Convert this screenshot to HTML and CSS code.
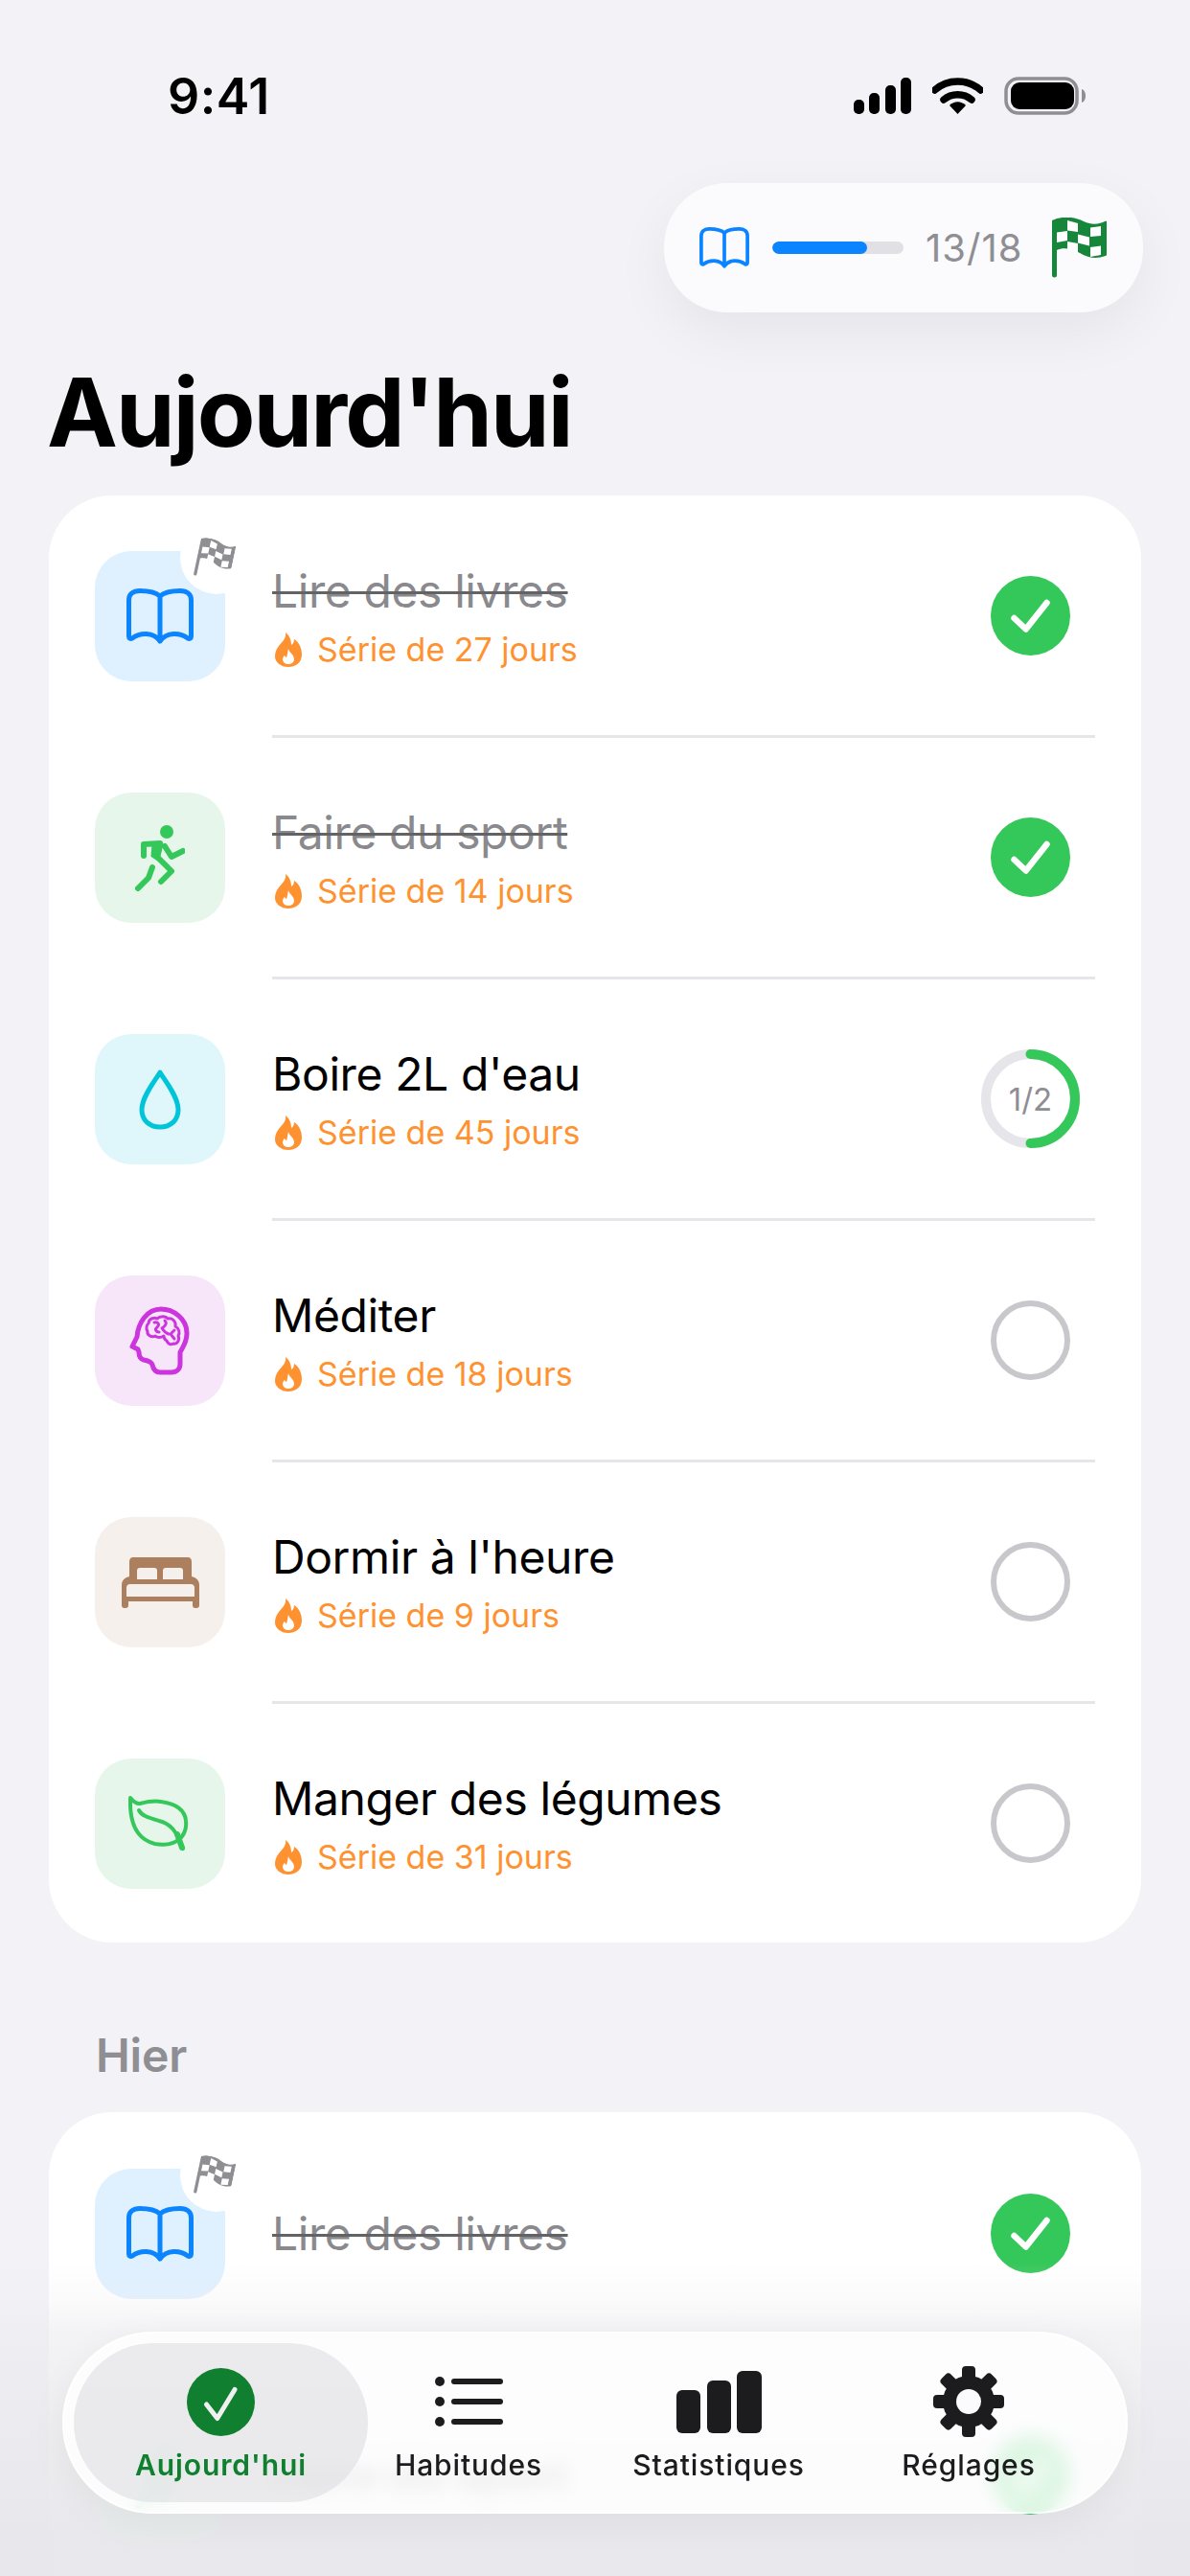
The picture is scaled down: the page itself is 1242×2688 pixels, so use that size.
FILE: index.html
```html
<!DOCTYPE html>
<html lang="fr">
<head>
  <meta charset="UTF-8">
  <meta name="viewport" content="width=device-width, initial-scale=1.0">
  <title>Aujourd'hui</title>
  <link rel="stylesheet" href="styles.css">
</head>
<body>
  <svg class="sprites" width="0" height="0" aria-hidden="true">
    <symbol id="book" viewBox="0 0 70 58">
      <path d="M35 8C30 3.500 22 2.500 14 2.500C7 2.500 2.500 6 2.500 12V50C2.500 52 4 53 6 52C14 46 28 45 35 55C42 45 56 46 64 52C66 53 67.500 52 67.500 50V12C67.500 6 63 2.500 56 2.500C48 2.500 40 3.500 35 8V55" fill="none" stroke="currentColor" stroke-width="5" stroke-linejoin="round" stroke-linecap="round"/>
    </symbol>
    <symbol id="flag" viewBox="16 13 58 63">
      <path d="M17 16C28 11 40 12 50 17C60 22 68 19 72 17Q75 16 75 19V50Q75 52 73 53C64 56 56 56 46 50C38 45 28 44 22 47V73A2.500 2.500 0 0 1 17 73Z" fill="currentColor"/>
      <path d="M33 16L44 19V28L33 26.500ZM57 23.500L68 22V32L57 33ZM22 28.500L33 27V37L22 39ZM44 30.500L56 33.500V42.500L44 39.500ZM33 38L44 40V50L33 47ZM57 44L68 42.500V52L57 54Z" fill="#fff"/>
    </symbol>
    <symbol id="flame" viewBox="0 0 28 36">
      <path d="M11 0C12 6 8 9 4 14C1 18 0 21 0 25C0 31 6 36 14 36C22 36 28 31 28 23C28 16 25 10 20 7C20 10 19 12 17 13C17 8 15 3 11 0Z" fill="#ff9230"/>
      <path d="M14 17C15 21 20 23 20 28C20 31 17 33 14 33C11 33 8 31 8 28C8 26 9 25 10 24C11 25 11 26 12 26C13 24 13 20 14 17Z" fill="#fff"/>
    </symbol>
    <symbol id="done" viewBox="0 0 83 83">
      <circle cx="41.500" cy="41.500" r="41.500" fill="#34c759"/>
      <path d="M24.500 44L36.700 55.500L58.500 28" fill="none" stroke="#fff" stroke-width="6.500" stroke-linecap="round" stroke-linejoin="round"/>
    </symbol>
    <symbol id="runner" viewBox="0 0 52 69">
      <circle cx="33" cy="7" r="7" fill="currentColor"/>
      <path d="M9 32L9 20L26 19L23 33L38 48L27 59M18 44L14 55L3 66M31 22L38 33L50 27" fill="none" stroke="currentColor" stroke-width="6" stroke-linecap="round" stroke-linejoin="round"/>
      <path d="M19 20H28L24 36L18 32Z" fill="currentColor" stroke="currentColor" stroke-width="3" stroke-linejoin="round"/>
    </symbol>
  </svg>

  <header class="status-bar">
    <span class="clock">9:41</span>
    <div class="status-icons">
      <svg width="60" height="38" viewBox="0 0 60 38">
        <rect x="0" y="23" width="11" height="15" rx="5" fill="#000"/>
        <rect x="16" y="16" width="11" height="22" rx="5" fill="#000"/>
        <rect x="33" y="8" width="11" height="30" rx="5" fill="#000"/>
        <rect x="49" y="0" width="11" height="38" rx="5" fill="#000"/>
      </svg>
      <svg width="53" height="38" viewBox="0 0 53 38">
        <path d="M2.500 13C16 1 37 1 50.500 13" fill="none" stroke="#000" stroke-width="7.500" stroke-linecap="round"/>
        <path d="M12 23C20 16 33 16 41 23" fill="none" stroke="#000" stroke-width="7.500" stroke-linecap="round"/>
        <path d="M18 29C23 24 30 24 35 29L26.500 38Z" fill="#000"/>
      </svg>
      <svg width="85" height="40" viewBox="0 0 85 40">
        <rect x="2" y="2" width="74" height="36" rx="13" fill="none" stroke="#8e8e93" stroke-width="3.500"/>
        <rect x="7" y="6" width="66" height="28" rx="9" fill="#000"/>
        <path d="M81 13C84 14 85 17 85 20C85 23 84 26 81 27Z" fill="#8e8e93"/>
      </svg>
    </div>
  </header>

  <main class="page">
    <div class="goal-pill">
      <svg class="goal-book"><use href="#book"/></svg>
      <div class="goal-bar"><div class="goal-fill" style="width: 72%"></div></div>
      <span class="goal-count">13/18</span>
      <svg class="goal-flag"><use href="#flag"/></svg>
    </div>

    <h1>Aujourd'hui</h1>

    <section class="card card-today">
      <div class="row">
        <div class="tile tile-blue">
          <svg class="ic-book"><use href="#book"/></svg>
          <span class="flag-badge"><svg><use href="#flag"/></svg></span>
        </div>
        <div class="row-body">
          <div class="row-text">
            <div class="name name-done">Lire des livres</div>
            <div class="streak"><svg><use href="#flame"/></svg>Série de 27 jours</div>
          </div>
          <div class="state"><svg class="state-done"><use href="#done"/></svg></div>
        </div>
      </div>

      <div class="row">
        <div class="tile tile-green">
          <svg class="ic-runner"><use href="#runner"/></svg>
        </div>
        <div class="row-body">
          <div class="row-text">
            <div class="name name-done">Faire du sport</div>
            <div class="streak"><svg><use href="#flame"/></svg>Série de 14 jours</div>
          </div>
          <div class="state"><svg class="state-done"><use href="#done"/></svg></div>
        </div>
      </div>

      <div class="row">
        <div class="tile tile-cyan">
          <svg class="ic-drop" viewBox="0 0 44 63">
            <path d="M22 3C26 10 41 28 41 42C41 53 33 60 22 60C11 60 3 53 3 42C3 28 18 10 22 3Z" fill="none" stroke="#00c4d8" stroke-width="5" stroke-linejoin="round"/>
          </svg>
        </div>
        <div class="row-body">
          <div class="row-text">
            <div class="name">Boire 2L d'eau</div>
            <div class="streak"><svg><use href="#flame"/></svg>Série de 45 jours</div>
          </div>
          <div class="state state-ring">
            <svg class="ring" viewBox="0 0 103 103">
              <circle cx="51.500" cy="51.500" r="46.500" fill="none" stroke="#e5e5ea" stroke-width="10"/>
              <path d="M51.500 5A46.500 46.500 0 0 1 51.500 98" fill="none" stroke="#34c759" stroke-width="10" stroke-linecap="round"/>
            </svg>
            <span class="ring-label">1/2</span>
          </div>
        </div>
      </div>

      <div class="row">
        <div class="tile tile-purple">
          <svg class="ic-brain" viewBox="0 0 72 76">
            <path d="M37 5C50 5 64 15 64 30C64 40 60 44 57 50V62C57 68 53 71 48 71H36C31 71 29 68 28 63C27 60 24 59 19 58C15 57 14 54 14 50L13 47L7 44L12 34C13 20 22 5 37 5Z" fill="none" stroke="#cc34de" stroke-width="5" stroke-linejoin="round"/>
            <path d="M24 20C24 15 30 13 33 15C36 12 42 12 44 15C49 14 53 18 52 23C56 25 57 30 55 33C57 37 54 42 50 41C47 43 44 41 43 38C41 37 40 35 40 33C37 35 33 35 31 33C27 35 22 32 23 28C21 26 22 21 24 20ZM30 19C34 18 36 21 33 24C30 26 32 29 35 29M41 17C44 20 41 23 38 25C40 28 42 30 45 31M51 27L47 31L51 36" fill="none" stroke="#cc34de" stroke-width="3" stroke-linejoin="round" stroke-linecap="round"/>
          </svg>
        </div>
        <div class="row-body">
          <div class="row-text">
            <div class="name">Méditer</div>
            <div class="streak"><svg><use href="#flame"/></svg>Série de 18 jours</div>
          </div>
          <div class="state"><span class="state-empty"></span></div>
        </div>
      </div>

      <div class="row">
        <div class="tile tile-brown">
          <svg class="ic-bed" viewBox="0 0 81 53">
            <path fill-rule="evenodd" d="M12 0H69Q73 0 73 5V20Q81 22 81 29V50Q81 53 78 53H77Q74 53 74 50V46H7V50Q7 53 4 53H3Q0 53 0 50V29Q0 22 8 20V5Q8 0 12 0ZM19 11Q16 11 16 14V23H37V14Q37 11 34 11ZM46 11Q43 11 43 14V23H64V14Q64 11 61 11ZM9 28Q5 28 5 32V41H76V32Q76 28 72 28Z" fill="#ac7f5e"/>
          </svg>
        </div>
        <div class="row-body">
          <div class="row-text">
            <div class="name">Dormir à l'heure</div>
            <div class="streak"><svg><use href="#flame"/></svg>Série de 9 jours</div>
          </div>
          <div class="state"><span class="state-empty"></span></div>
        </div>
      </div>

      <div class="row row-last">
        <div class="tile tile-green">
          <svg class="ic-leaf" viewBox="0 0 67 58">
            <path d="M2 2C5 6 8 8 12 8C20 6 28 5 34 6C48 8 59 14 60 26C61 34 58 42 52 46C44 52 30 52 22 48C8 42 1 28 2 2Z" fill="none" stroke="#34c759" stroke-width="4" stroke-linejoin="round"/>
            <path d="M11 15C14 21 22 23 32 26C44 29 50 36 57 55" fill="none" stroke="#34c759" stroke-width="4" stroke-linecap="round"/>
            <path d="M51 40L56 54" fill="none" stroke="#34c759" stroke-width="6" stroke-linecap="round"/>
          </svg>
        </div>
        <div class="row-body">
          <div class="row-text">
            <div class="name">Manger des légumes</div>
            <div class="streak"><svg><use href="#flame"/></svg>Série de 31 jours</div>
          </div>
          <div class="state"><span class="state-empty"></span></div>
        </div>
      </div>
    </section>

    <h2>Hier</h2>

    <section class="card card-yesterday">
      <div class="row">
        <div class="tile tile-blue">
          <svg class="ic-book"><use href="#book"/></svg>
          <span class="flag-badge"><svg><use href="#flag"/></svg></span>
        </div>
        <div class="row-body">
          <div class="row-text">
            <div class="name name-done">Lire des livres</div>
          </div>
          <div class="state"><svg class="state-done"><use href="#done"/></svg></div>
        </div>
      </div>
      <div class="row row-behind">
        <div class="tile tile-green">
          <svg class="ic-runner"><use href="#runner"/></svg>
        </div>
        <div class="row-body">
          <div class="row-text">
            <div class="name name-done">Faire du sport</div>
          </div>
          <div class="state"><svg class="state-done"><use href="#done"/></svg></div>
        </div>
      </div>
    </section>
  </main>

  <div class="bottom-fade"></div>

  <nav class="tabbar">
    <a class="tab tab-active">
      <svg class="tab-icon" width="71" height="71" viewBox="0 0 71 71">
        <circle cx="35.500" cy="35.500" r="35.500" fill="#108030"/>
        <path d="M20.500 38L31.800 52.500L50 22.500" fill="none" stroke="#f0f0f0" stroke-width="5" stroke-linecap="round" stroke-linejoin="round"/>
      </svg>
      <span>Aujourd'hui</span>
    </a>
    <a class="tab">
      <svg class="tab-icon" width="71" height="74" viewBox="0 0 71 74">
        <circle cx="5" cy="16" r="5" fill="#1c1c1e"/>
        <circle cx="5" cy="37" r="5" fill="#1c1c1e"/>
        <circle cx="5" cy="58" r="5" fill="#1c1c1e"/>
        <rect x="17" y="13" width="54" height="6" rx="3" fill="#1c1c1e"/>
        <rect x="17" y="34" width="54" height="6" rx="3" fill="#1c1c1e"/>
        <rect x="17" y="55" width="54" height="6" rx="3" fill="#1c1c1e"/>
      </svg>
      <span>Habitudes</span>
    </a>
    <a class="tab">
      <svg class="tab-icon" width="89" height="74" viewBox="0 0 89 74">
        <rect x="0" y="25" width="25" height="45" rx="6" fill="#1c1c1e"/>
        <rect x="32" y="15" width="25" height="55" rx="6" fill="#1c1c1e"/>
        <rect x="63" y="5" width="26" height="65" rx="6" fill="#1c1c1e"/>
      </svg>
      <span>Statistiques</span>
    </a>
    <a class="tab">
      <svg class="tab-icon" width="74" height="74" viewBox="0 0 74 74">
        <g fill="#1c1c1e">
          <rect x="30" y="0" width="14" height="22" rx="4"/>
          <rect x="30" y="0" width="14" height="22" rx="4" transform="rotate(45 37 37)"/>
          <rect x="30" y="0" width="14" height="22" rx="4" transform="rotate(90 37 37)"/>
          <rect x="30" y="0" width="14" height="22" rx="4" transform="rotate(135 37 37)"/>
          <rect x="30" y="0" width="14" height="22" rx="4" transform="rotate(180 37 37)"/>
          <rect x="30" y="0" width="14" height="22" rx="4" transform="rotate(225 37 37)"/>
          <rect x="30" y="0" width="14" height="22" rx="4" transform="rotate(270 37 37)"/>
          <rect x="30" y="0" width="14" height="22" rx="4" transform="rotate(315 37 37)"/>
          <circle cx="37" cy="37" r="27"/>
        </g>
        <circle cx="37" cy="37" r="13" fill="#fbfbfe"/>
      </svg>
      <span>Réglages</span>
    </a>
  </nav>
</body>
</html>
```

FILE: styles.css
```css
* {
  box-sizing: border-box;
}
html, body {
  margin: 0;
  height: 2688px;
}
body {
  position: relative;
  width: 1242px;
  overflow: hidden;
  font-family: Inter, "Noto Sans", sans-serif;
  background-color: #f2f2f7;
  color: #000;
}
.sprites {
  position: absolute;
}

/* status bar */
.status-bar {
  display: flex;
  align-items: center;
  justify-content: space-between;
  height: 120px;
  padding: 80px 109px 0 175px;
}
.clock {
  font-size: 52px;
  font-weight: 600;
  letter-spacing: 0.500px;
}
.status-icons {
  display: flex;
  align-items: center;
  gap: 22px;
}

.page {
  padding: 71px 51px 0;
}

/* goal pill */
.goal-pill {
  display: flex;
  align-items: center;
  width: 500px;
  height: 135px;
  margin-left: auto;
  margin-right: -2px;
  padding: 0 38px 0 37px;
  background: #fbfbfe;
  border-radius: 66px;
  box-shadow: 0 20px 60px rgba(0, 0, 0, 0.06);
}
.goal-book {
  width: 52px;
  height: 43px;
  color: #0a84ff;
}
.goal-bar {
  width: 137px;
  height: 13px;
  margin: 0 23px 0 24px;
  background: #e0e0e5;
  border-radius: 7px;
  overflow: hidden;
}
.goal-fill {
  height: 100%;
  background: #0a84ff;
  border-radius: 7px;
}
.goal-count {
  width: 99px;
  font-size: 40px;
  letter-spacing: 1px;
  color: #8e8e93;
  white-space: nowrap;
}
.goal-flag {
  width: 58px;
  height: 63px;
  margin-left: auto;
  color: #16873a;
}
.goal-flag, .goal-book {
  flex: none;
}

h1 {
  margin: 44px 0 0 -2px;
  height: 147px;
  font-size: 99px;
  font-weight: 700;
  line-height: 120px;
  letter-spacing: -1.900px;
}
h2 {
  margin: 89px 0 0 49px;
  height: 88px;
  font-size: 48px;
  font-weight: 600;
  line-height: 57px;
  letter-spacing: -0.200px;
  color: #8e8e93;
}

/* cards */
.card {
  width: 1140px;
  padding: 1px 48px 0;
  background: #fff;
  border-radius: 66px;
}
.card-yesterday {
  height: 560px;
  padding-top: 2px;
}
.row {
  display: flex;
  align-items: flex-start;
}
.row-body {
  flex: 1;
  display: flex;
  align-items: center;
  height: 249px;
  margin-left: 49px;
  box-sizing: content-box;
  border-bottom: 3px solid #e5e5ea;
  padding-right: 16px;
}
.row-last .row-body,
.card-yesterday .row-body {
  border-bottom-color: transparent;
}
.row-last .row-body {
  border-bottom: 0;
}
.row-text {
  flex: 1;
}
.name {
  font-size: 48px;
  line-height: 57px;
  letter-spacing: -0.400px;
}
.name-done {
  color: #8a8a8e;
  text-decoration: line-through;
  text-decoration-color: #636366;
  text-decoration-thickness: 3px;
}
.streak {
  display: flex;
  align-items: center;
  gap: 16px;
  margin-top: 13px;
  font-size: 34px;
  line-height: 40px;
  color: #ff9230;
}
.streak svg {
  width: 28px;
  height: 36px;
  margin-left: 3px;
}

/* coloured tiles */
.tile {
  position: relative;
  flex: none;
  display: flex;
  align-items: center;
  justify-content: center;
  width: 136px;
  height: 136px;
  margin-top: 57px;
  border-radius: 38px;
}
.tile-blue { background: #dff0ff; }
.tile-green { background: #e6f6ea; }
.tile-cyan { background: #dff7fa; }
.tile-purple { background: #f7e5fa; }
.tile-brown { background: #f5f0ec; }

.ic-book {
  width: 70px;
  height: 58px;
  color: #0a84ff;
}
.ic-runner {
  width: 52px;
  height: 69px;
  color: #34c759;
}
.ic-drop {
  width: 44px;
  height: 63px;
}
.ic-brain {
  width: 72px;
  height: 76px;
}
.ic-bed {
  width: 81px;
  height: 53px;
}
.ic-leaf {
  width: 67px;
  height: 58px;
}
.flag-badge {
  position: absolute;
  top: -31px;
  left: 89px;
  display: flex;
  align-items: center;
  justify-content: center;
  width: 76px;
  height: 76px;
  background: #fff;
  border-radius: 50%;
  color: #8e8e93;
}
.flag-badge svg {
  width: 38px;
  height: 42px;
  margin: 4px 0 0 -4px;
  transform: rotate(12deg);
}

/* right hand state */
.state {
  display: grid;
  place-items: center;
  flex: none;
  width: 103px;
  height: 103px;
}
.state-done {
  width: 83px;
  height: 83px;
}
.state-empty {
  width: 83px;
  height: 83px;
  border: 6px solid #c7c7cc;
  border-radius: 50%;
}
.state-ring > * {
  grid-area: 1 / 1;
}
.ring {
  width: 103px;
  height: 103px;
}
.ring-label {
  font-size: 33px;
  color: #8e8e93;
}

/* tab bar and the fade below it */
.bottom-fade {
  position: absolute;
  z-index: 1;
  left: 0;
  right: 0;
  top: 2360px;
  bottom: 0;
  background: linear-gradient(to bottom, rgba(238, 238, 241, 0), rgba(238, 238, 241, 0.25) 40px, rgba(237, 237, 240, 0.65) 73px, rgba(232, 232, 236, 0.97) 280px);
}
/* the row that scrolls behind the bar stays readable through its blur */
.row-behind {
  position: relative;
  z-index: 2;
}
.row-behind .tile-green {
  background: rgba(230, 246, 234, 0.2);
}
.tabbar {
  position: absolute;
  z-index: 3;
  left: 65px;
  top: 2433px;
  display: flex;
  width: 1112px;
  height: 190px;
  padding: 12px;
  background: rgba(255, 255, 255, 0.84);
  backdrop-filter: blur(9px);
  border-radius: 95px;
  box-shadow: inset 0 0 0 2px rgba(255, 255, 255, 0.7), 0 10px 40px rgba(0, 0, 0, 0.05);
}
.tab {
  display: flex;
  flex-direction: column;
  align-items: center;
  flex: none;
  width: 210px;
  height: 166px;
  padding-top: 24px;
  font-size: 30px;
  font-weight: 500;
  line-height: 36px;
  letter-spacing: 0.900px;
  color: #1c1c1e;
}
.tab + .tab + .tab {
  margin-left: 51px;
}
.tab-active {
  width: 307px;
  padding-top: 26px;
  background: rgba(222, 222, 225, 0.6);
  border-radius: 83px;
  color: #108030;
  font-weight: 600;
}
.tab-icon {
  flex: none;
  height: 74px;
  margin-bottom: 11px;
}
.tab-active .tab-icon {
  height: 71px;
  margin-bottom: 12px;
}
```
